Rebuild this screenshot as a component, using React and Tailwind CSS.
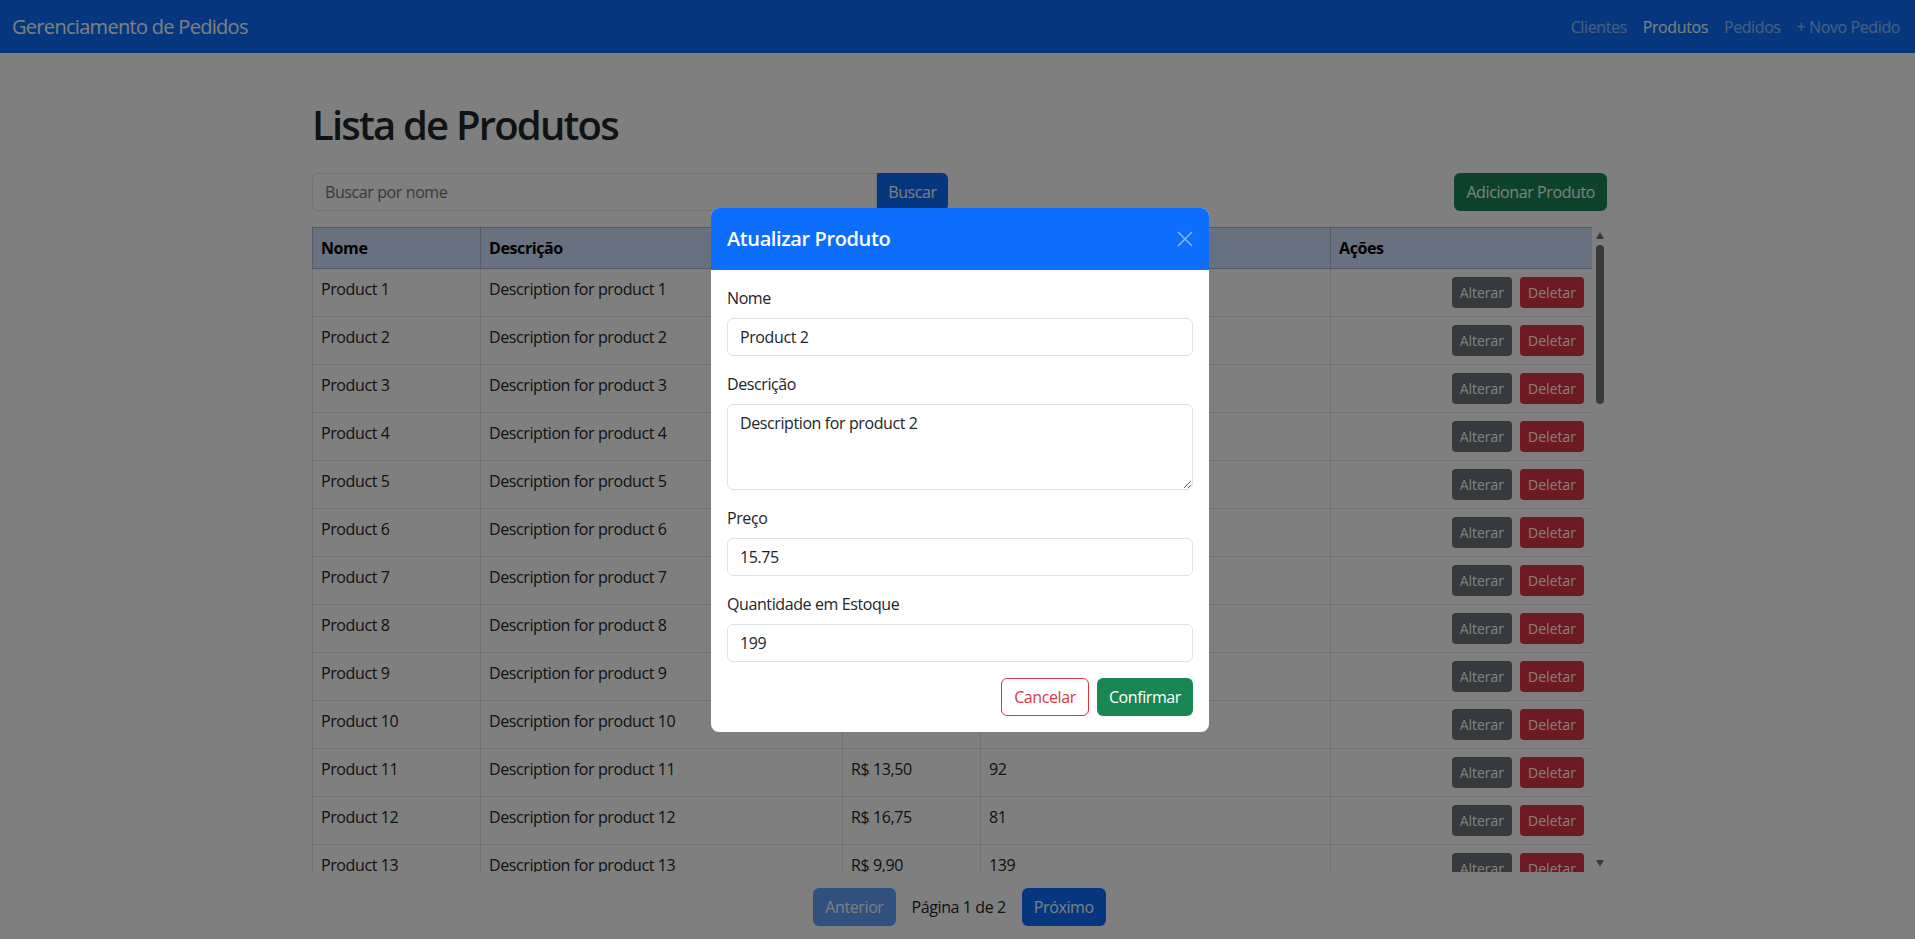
import React from 'react';

const stock = [150, 199, 75, 120, 64, 210, 88, 45, 133, 57, 92, 81, 139, 66, 104, 172, 58, 97, 143, 71, 126, 84, 190, 62, 115, 77, 158, 93, 49, 181, 68, 122, 99, 147, 53, 176, 86, 131, 74, 108, 165, 59, 91, 137, 82, 119, 70, 154, 95, 128];
const prices = [10.5, 15.75, 20, 8.25, 12.9, 18.4, 22.5, 6.75, 14.3, 25, 13.5, 16.75, 9.9, 11.2, 19.8, 7.5, 21.35, 17.6, 24.1, 5.95, 13.1, 16.2, 9.45, 23.7, 11.85, 18.9, 8.6, 20.25, 14.75, 12.4, 22.15, 6.3, 15.2, 19.05, 10.95, 17.3, 7.85, 21.9, 13.65, 16.4, 9.25, 24.8, 11.55, 18.15, 8.95, 20.6, 14.05, 12.75, 23.2, 15.45];

const products = stock.map((qtd, i) => ({
  id: i + 1,
  nome: `Product ${i + 1}`,
  descricao: `Description for product ${i + 1}`,
  preco: prices[i],
  estoque: qtd,
}));

const formatPrice = (v) => 'R$ ' + v.toFixed(2).replace('.', ',');

const Field = ({ label, children }) => (
  <div className="mb-4">
    <label className="block mb-2 leading-6">{label}</label>
    {children}
  </div>
);

export default function App() {
  return (
    <div className="min-h-screen bg-white text-[#212529] font-['Open_Sans',sans-serif] text-base leading-6 tracking-[-0.025em]">
      <nav className="h-[53px] bg-[#0d6efd] flex items-center justify-between pl-3 pr-[7px]">
        <span className="text-xl text-white tracking-[-0.035em]">Gerenciamento de Pedidos</span>
        <div className="flex">
          <a className="px-2 text-white/55">Clientes</a>
          <a className="px-2 text-white">Produtos</a>
          <a className="px-2 text-white/55">Pedidos</a>
          <a className="px-2 text-white/55">+ Novo Pedido</a>
        </div>
      </nav>

      <main className="ml-[312px] w-[1295px] pt-12">
        <h1 className="text-[40px] leading-[48px] font-semibold tracking-[-0.045em] mb-6">Lista de Produtos</h1>

        <div className="flex justify-between mb-4">
          <div className="flex w-[636px]">
            <input
              className="flex-1 h-[38px] border border-[#dee2e6] rounded-l-md px-3 outline-none placeholder:text-[#6c757d]"
              placeholder="Buscar por nome"
            />
            <button className="h-[38px] w-[71px] bg-[#0d6efd] text-white rounded-r-md">Buscar</button>
          </div>
          <button className="h-[38px] px-3 bg-[#198754] text-white rounded-md">Adicionar Produto</button>
        </div>

        <div className="flex h-[645px]">
          <div className="w-[1280px] overflow-hidden">
            <table className="w-[1280px] table-fixed border-collapse">
              <thead>
                <tr className="bg-[#cfe2ff] text-black font-bold">
                  <th className="w-[168px] border border-[#a6b5cc] p-2 text-left align-top">Nome</th>
                  <th className="w-[362px] border border-[#a6b5cc] p-2 text-left align-top">Descrição</th>
                  <th className="w-[138px] border border-[#a6b5cc] p-2 text-left align-top">Preço</th>
                  <th className="w-[350px] border border-[#a6b5cc] p-2 text-left align-top">Estoque</th>
                  <th className="w-[262px] border border-[#a6b5cc] p-2 text-left align-top">Ações</th>
                </tr>
              </thead>
              <tbody>
                {products.map((p) => (
                  <tr key={p.id}>
                    <td className="border border-[#dee2e6] p-2 align-top">{p.nome}</td>
                    <td className="border border-[#dee2e6] p-2 align-top">{p.descricao}</td>
                    <td className="border border-[#dee2e6] p-2 align-top">{formatPrice(p.preco)}</td>
                    <td className="border border-[#dee2e6] p-2 align-top">{p.estoque}</td>
                    <td className="border border-[#dee2e6] p-2 align-top">
                      <div className="flex justify-end gap-2 tracking-normal">
                        <button className="h-[31px] px-2 text-sm bg-[#6c757d] text-white rounded">Alterar</button>
                        <button className="h-[31px] px-2 text-sm bg-[#dc3545] text-white rounded">Deletar</button>
                      </div>
                    </td>
                  </tr>
                ))}
              </tbody>
            </table>
          </div>
          {/* scrollbar */}
          <div className="w-[15px] flex flex-col items-center pt-[5px] pb-[5px]">
            <svg width="8" height="7" viewBox="0 0 8 7"><path d="M4 0L8 7H0Z" fill="#757575" /></svg>
            <div className="mt-[6px] w-[8px] h-[159px] rounded-full bg-[#747474]" />
            <div className="flex-1" />
            <svg width="8" height="7" viewBox="0 0 8 7"><path d="M0 0H8L4 7Z" fill="#757575" /></svg>
          </div>
        </div>

        <div className="flex justify-center items-center mt-4">
          <button disabled className="h-[38px] px-3 bg-[#0d6efd] text-white rounded-md opacity-65">Anterior</button>
          <span className="mx-4">Página 1 de 2</span>
          <button className="h-[38px] px-3 bg-[#0d6efd] text-white rounded-md">Próximo</button>
        </div>
      </main>

      {/* backdrop + modal */}
      <div className="fixed inset-0 bg-black/50 flex items-center justify-center">
        <div className="ml-[5px] w-[498px] bg-white rounded-lg">
          <div className="h-[62px] bg-[#0d6efd] rounded-t-lg flex items-center justify-between px-4">
            <h5 className="text-xl font-semibold text-white">Atualizar Produto</h5>
            <svg width="16" height="16" viewBox="0 0 16 16" className="opacity-50">
              <path d="M1 1L15 15M15 1L1 15" stroke="white" strokeWidth="1.6" />
            </svg>
          </div>
          <div className="p-4">
            <Field label="Nome">
              <input defaultValue="Product 2" className="w-full h-[38px] border border-[#dee2e6] rounded-md px-3 outline-none" />
            </Field>
            <Field label="Descrição">
              <textarea
                defaultValue="Description for product 2"
                rows={3}
                className="block w-full h-[86px] border border-[#dee2e6] rounded-md px-3 py-1.5 outline-none resize-y"
              />
            </Field>
            <Field label="Preço">
              <input defaultValue="15.75" className="w-full h-[38px] border border-[#dee2e6] rounded-md px-3 outline-none" />
            </Field>
            <Field label="Quantidade em Estoque">
              <input defaultValue="199" className="w-full h-[38px] border border-[#dee2e6] rounded-md px-3 outline-none" />
            </Field>
            <div className="flex justify-end gap-2">
              <button className="h-[38px] px-3 border border-[#dc3545] text-[#dc3545] rounded-md">Cancelar</button>
              <button className="h-[38px] px-3 bg-[#198754] text-white rounded-md">Confirmar</button>
            </div>
          </div>
        </div>
      </div>
    </div>
  );
}
